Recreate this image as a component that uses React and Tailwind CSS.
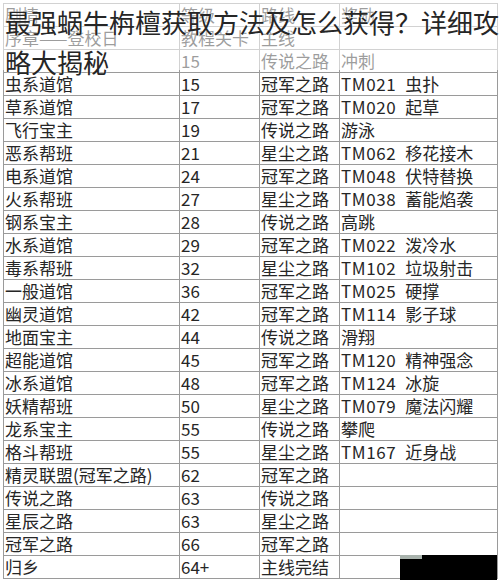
import React from "react";

const rows = [
  ["剧情", "等级", "路线", "奖励"],
  ["序章——登校日", "教程关卡", "主线", ""],
  ["", "15", "传说之路", "冲刺"],
  ["虫系道馆", "15", "冠军之路", "TM021 虫扑"],
  ["草系道馆", "17", "冠军之路", "TM020 起草"],
  ["飞行宝主", "19", "传说之路", "游泳"],
  ["恶系帮班", "21", "星尘之路", "TM062 移花接木"],
  ["电系道馆", "24", "冠军之路", "TM048 伏特替换"],
  ["火系帮班", "27", "星尘之路", "TM038 蓄能焰袭"],
  ["钢系宝主", "28", "传说之路", "高跳"],
  ["水系道馆", "29", "冠军之路", "TM022 泼冷水"],
  ["毒系帮班", "32", "星尘之路", "TM102 垃圾射击"],
  ["一般道馆", "36", "冠军之路", "TM025 硬撑"],
  ["幽灵道馆", "42", "冠军之路", "TM114 影子球"],
  ["地面宝主", "44", "传说之路", "滑翔"],
  ["超能道馆", "45", "冠军之路", "TM120 精神强念"],
  ["冰系道馆", "48", "冠军之路", "TM124 冰旋"],
  ["妖精帮班", "50", "星尘之路", "TM079 魔法闪耀"],
  ["龙系宝主", "55", "传说之路", "攀爬"],
  ["格斗帮班", "55", "星尘之路", "TM167 近身战"],
  ["精灵联盟(冠军之路)", "62", "冠军之路", ""],
  ["传说之路", "63", "传说之路", ""],
  ["星辰之路", "63", "星尘之路", ""],
  ["冠军之路", "66", "冠军之路", ""],
  ["归乡", "64+", "主线完结", ""],
];

// "TM021 虫扑" -> code and move name with a wider gap, as in the picture
const Reward = ({ text }) => {
  const m = text.match(/^(TM\d+) (.+)$/);
  if (!m) return text;
  return (
    <span className="flex gap-[9px]">
      <span className="tracking-[0.6px]">{m[1]}</span>
      <span>{m[2]}</span>
    </span>
  );
};

const App = () => {
  return (
    <div className="relative w-[500px] h-[580px] overflow-hidden bg-white font-['Noto_Sans_CJK_SC','Noto_Sans',sans-serif]">
      {/* the table */}
      <div className="mt-[3px] ml-[3px] w-[495px] grid grid-cols-[176px_80px_80px_158px] border-l border-t border-[#9a9a9a] text-[17px] text-[#262626]">
        {rows.map((row, i) =>
          row.map((cell, j) => (
            <div
              key={i + "-" + j}
              className="h-[23px] pl-px leading-[22px] whitespace-nowrap overflow-hidden border-r border-b border-[#9a9a9a]"
            >
              {j === 3 ? <Reward text={cell} /> : cell}
            </div>
          ))
        )}
      </div>

      {/* faded band under the title */}
      <div className="absolute left-0 top-0 w-[500px] h-[70px] bg-white/55" />

      <div className="absolute left-[5px] top-[2px] text-[26px] leading-[40px] text-[#262626] whitespace-nowrap [text-shadow:0_0_2px_#fff]">
        <div>最强蜗牛栴檀获取方法及怎么获得？详细攻</div>
        <div>略大揭秘</div>
      </div>

      {/* dark corner block */}
      <div className="absolute left-[400px] top-[555px] w-[97px] h-[25px] bg-black">
        <div className="w-[22px] h-[4px] bg-[#a9b3ad]" />
      </div>
    </div>
  );
};

export default App;
